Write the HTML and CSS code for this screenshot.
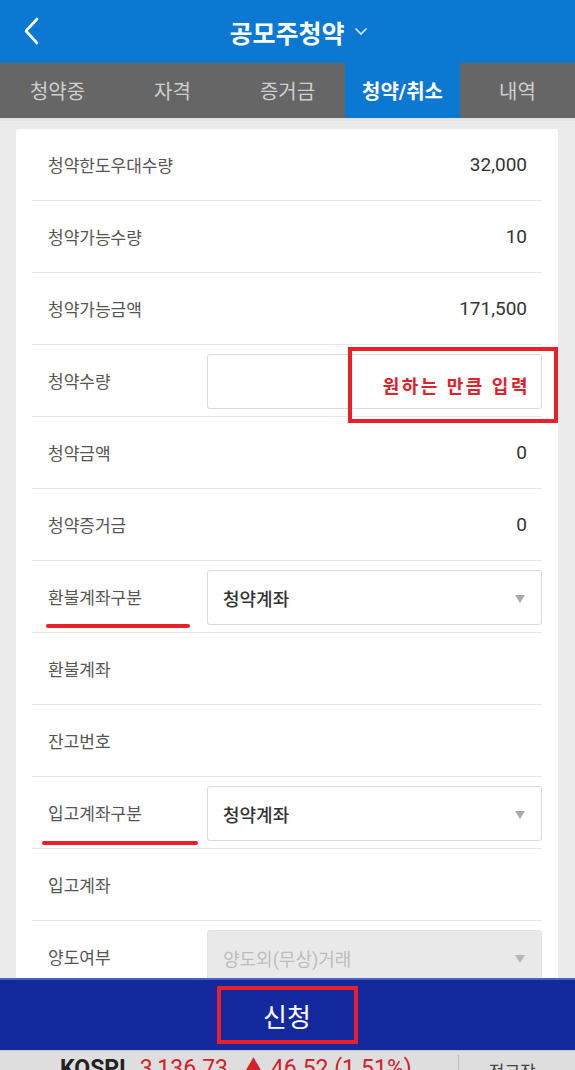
FILE: index.html
```html
<!DOCTYPE html>
<html lang="ko">
<head>
  <meta charset="UTF-8" />
  <title>공모주청약</title>
  <meta name="viewport" content="width=device-width, initial-scale=1.0"/>
  <link rel="stylesheet" href="styles.css">
</head>
<body>
  <div class="screen">

    <header class="appbar">
      <svg class="back" width="20" height="28" viewBox="0 0 20 28">
        <path d="M15 2 L4 14 L15 26" fill="none" stroke="#fff" stroke-width="2.6" stroke-linecap="round" stroke-linejoin="round"/>
      </svg>
      <h1 class="title">공모주청약
        <svg class="caret" width="14" height="9" viewBox="0 0 14 9">
          <path d="M1.5 1.5 L7 7 L12.5 1.5" fill="none" stroke="#d6e8f8" stroke-width="1.6"/>
        </svg>
      </h1>
    </header>

    <nav class="tabs">
      <div class="tab">청약중</div>
      <div class="tab">자격</div>
      <div class="tab">증거금</div>
      <div class="tab active">청약/취소</div>
      <div class="tab">내역</div>
    </nav>

    <main class="content">
      <div class="card">
        <div class="row"><span class="label">청약한도우대수량</span><span class="value">32,000</span></div>
        <div class="row"><span class="label">청약가능수량</span><span class="value">10</span></div>
        <div class="row"><span class="label">청약가능금액</span><span class="value">171,500</span></div>
        <div class="row">
          <span class="label">청약수량</span>
          <div class="field"></div>
          <div class="mark-box"><span>원하는 만큼 입력</span></div>
        </div>
        <div class="row"><span class="label">청약금액</span><span class="value">0</span></div>
        <div class="row"><span class="label">청약증거금</span><span class="value">0</span></div>
        <div class="row">
          <span class="label">환불계좌구분</span>
          <div class="field select">청약계좌<i class="arrow"></i></div>
          <div class="underline u1"></div>
        </div>
        <div class="row"><span class="label">환불계좌</span></div>
        <div class="row"><span class="label">잔고번호</span></div>
        <div class="row">
          <span class="label">입고계좌구분</span>
          <div class="field select">청약계좌<i class="arrow"></i></div>
          <div class="underline u2"></div>
        </div>
        <div class="row"><span class="label">입고계좌</span></div>
        <div class="row">
          <span class="label">양도여부</span>
          <div class="field select disabled">양도외(무상)거래<i class="arrow"></i></div>
        </div>
      </div>
    </main>

    <footer class="submit-bar">
      <div class="submit-mark">신청</div>
    </footer>

    <div class="ticker">
      <span class="idx">KOSPI</span>
      <span class="up">3,136.73</span>
      <span class="up">▲ 46.52 (1.51%)</span>
      <span class="sep"></span>
      <span class="more">전고장</span>
    </div>

  </div>
</body>
</html>
```

FILE: styles.css
```css
* {
  box-sizing: border-box;
}

body {
  margin: 0;
  background: #ebebeb;
  font-family: Roboto, "Noto Sans CJK KR", sans-serif;
  color: #333;
}

.screen {
  width: 575px;
  height: 1070px;
  display: flex;
  flex-direction: column;
  overflow: hidden;
}

/* 상단바 */
.appbar {
  height: 63px;
  flex: none;
  background: #0b78d1;
  display: flex;
  align-items: center;
  justify-content: center;
  position: relative;
}

.back {
  position: absolute;
  left: 22px;
  top: 17px;
}

.title {
  margin: 0;
  font-size: 25px;
  font-weight: 700;
  color: #fff;
  display: flex;
  align-items: center;
  gap: 9px;
  padding-left: 22px;
}

/* 탭 */
.tabs {
  height: 55px;
  flex: none;
  display: grid;
  grid-template-columns: repeat(5, 1fr);
  background: #666;
}

.tab {
  display: flex;
  align-items: center;
  justify-content: center;
  font-size: 20px;
  color: #cfcfcf;
}

.tab.active {
  background: #0b78d1;
  color: #fff;
  font-weight: 700;
}

/* 본문 */
.content {
  flex: 1;
  overflow: hidden;
  padding: 11px 17px 0 16px;
  border-top: 3px solid #e3e3e3;
}

.card {
  background: #fff;
  border-radius: 2px;
  padding: 0 16px;
  margin-top: -3px;
}

.row {
  height: 72px;
  display: flex;
  align-items: center;
  justify-content: space-between;
  border-bottom: 1px solid #e8e8e8;
  padding: 0 15px 0 16px;
  position: relative;
}

.label {
  font-size: 17px;
  color: #555;
  flex: none;
}

.value {
  font-size: 19px;
  color: #333;
}

.field {
  position: absolute;
  left: 175px;
  right: 0;
  top: 9px;
  height: 55px;
  border: 1px solid #dadada;
  border-radius: 3px;
  background: #fff;
}

.select {
  display: flex;
  align-items: center;
  padding-left: 15px;
  font-size: 18px;
  font-weight: 500;
  color: #333;
}

.select.disabled {
  background: #e9e9e9;
  border-color: #e3e3e3;
  color: #bdbdbd;
  font-weight: 400;
}

.arrow {
  position: absolute;
  right: 16px;
  top: 24px;
  width: 0;
  height: 0;
  border-left: 5px solid transparent;
  border-right: 5px solid transparent;
  border-top: 8px solid #a9a9a9;
}

.disabled .arrow {
  border-top-color: #b5b5b5;
}

/* 빨간 표시 */
.mark-box {
  position: absolute;
  left: 316px;
  top: 2px;
  width: 210px;
  height: 76px;
  border: 4px solid #e8202a;
  display: flex;
  align-items: center;
  justify-content: flex-end;
  padding-right: 24px;
}

.mark-box span {
  font-size: 18px;
  font-weight: 700;
  color: #e0202a;
  letter-spacing: 2.5px;
}

.underline {
  position: absolute;
  height: 4px;
  border-radius: 2px;
  background: #e8202a;
}

.u1 {
  left: 14px;
  width: 144px;
  top: 63px;
}

.u2 {
  left: 10px;
  width: 156px;
  top: 64px;
}

/* 하단 신청 */
.submit-bar {
  height: 72px;
  flex: none;
  background: #15299f;
  border-top: 2px solid #4d62c4;
  display: flex;
  align-items: center;
  justify-content: center;
}

.submit-mark {
  width: 141px;
  height: 58px;
  border: 4px solid #e8202a;
  display: flex;
  align-items: center;
  justify-content: center;
  font-size: 26px;
  color: #fff;
  margin-left: -1px;
}

.ticker {
  height: 20px;
  flex: none;
  background: #dedede;
  border-top: 1px solid #c8c8c8;
  overflow: hidden;
  display: flex;
  align-items: flex-start;
  padding: 4px 0 0 60px;
  font-size: 23px;
  line-height: 28px;
  gap: 14px;
  white-space: nowrap;
}

.idx {
  font-weight: 700;
  color: #222;
}

.up {
  color: #d3202a;
}

.sep {
  width: 1px;
  height: 20px;
  background: #bbb;
  margin-left: 32px;
}

.more {
  font-size: 17px;
  color: #444;
  margin-left: 16px;
  padding-top: 3px;
}
```
